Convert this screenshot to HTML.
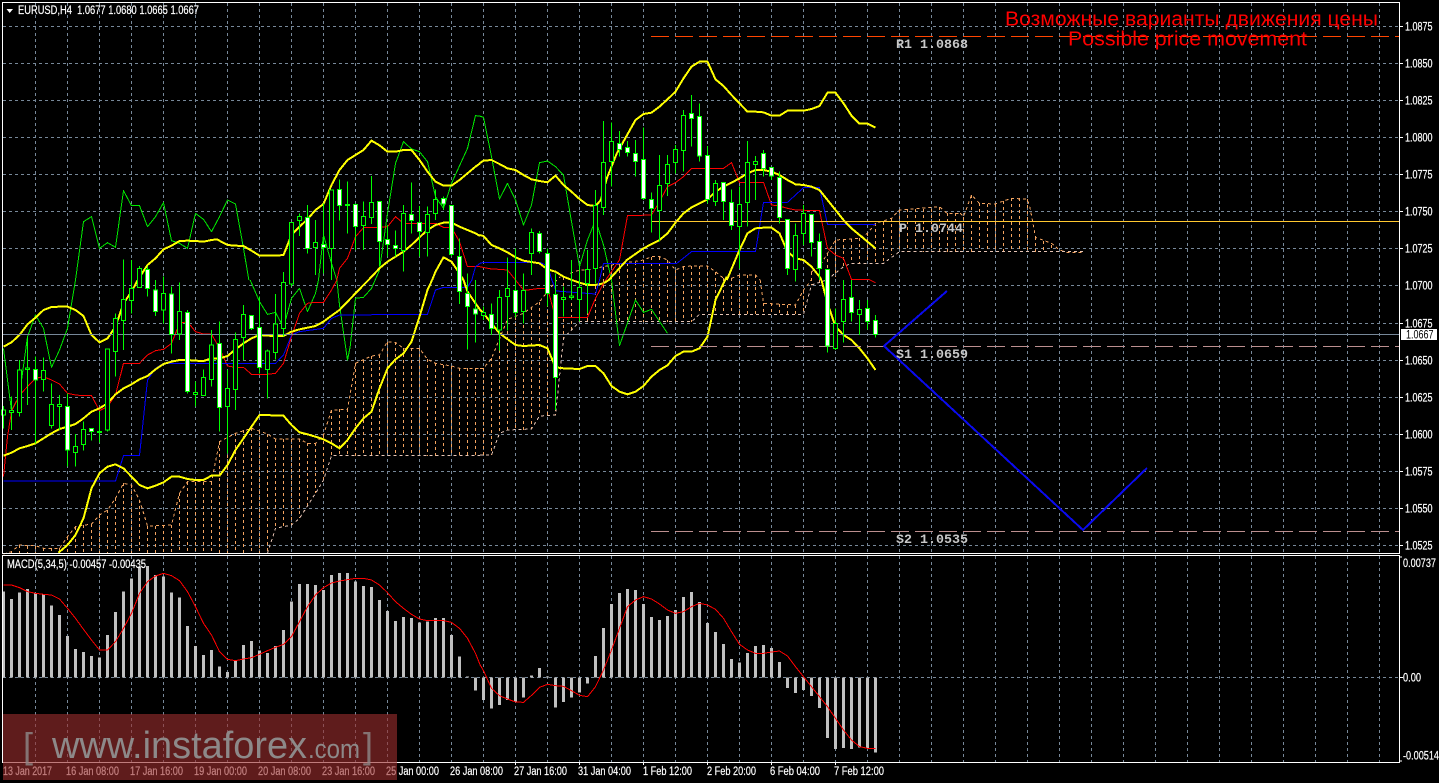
<!DOCTYPE html>
<html lang="en">
<head>
<meta charset="utf-8">
<title>EURUSD,H4</title>
<style>
html,body{margin:0;padding:0;background:#000;width:1439px;height:783px;overflow:hidden}
svg{position:absolute;left:0;top:0;display:block}
.ax{font:11.5px "Liberation Sans",sans-serif;fill:#fff;stroke:#fff;stroke-width:.2}
.lv{font:bold 13.33px "Liberation Mono",monospace;fill:#c8c8c8}
.rd{font:20px "Liberation Sans","Noto Sans CJK SC",sans-serif;fill:#f00}
.wm{font-family:"Liberation Sans",sans-serif;fill:#8d8989}
</style>
</head>
<body>
<svg xmlns="http://www.w3.org/2000/svg" width="1439" height="783" viewBox="0 0 1439 783">
<rect width="1439" height="783" fill="#000"/>
<g shape-rendering="crispEdges">
<!-- grid -->
<path fill="none" stroke="#778899" stroke-dasharray="3 3" d="M3 26.5H1399M3 63.5H1399M3 100.5H1399M3 137.5H1399M3 174.5H1399M3 211.5H1399M3 248.5H1399M3 285.5H1399M3 323.5H1399M3 360.5H1399M3 397.5H1399M3 434.5H1399M3 471.5H1399M3 508.5H1399M3 545.5H1399M3 677.5H1399"/>
<path fill="none" stroke="#778899" stroke-dasharray="3 3" d="M35.5 3V553M67.5 3V553M99.5 3V553M131.5 3V553M163.5 3V553M195.5 3V553M227.5 3V553M259.5 3V553M291.5 3V553M323.5 3V553M355.5 3V553M387.5 3V553M419.5 3V553M451.5 3V553M483.5 3V553M515.5 3V553M547.5 3V553M579.5 3V553M611.5 3V553M643.5 3V553M675.5 3V553M707.5 3V553M739.5 3V553M771.5 3V553M803.5 3V553M835.5 3V553M867.5 3V553M899.5 3V553M931.5 3V553M963.5 3V553M995.5 3V553M1027.5 3V553M1059.5 3V553M1091.5 3V553M1123.5 3V553M1155.5 3V553M1187.5 3V553M1219.5 3V553M1251.5 3V553M1283.5 3V553M1315.5 3V553M1347.5 3V553M1379.5 3V553"/>
<path fill="none" stroke="#778899" stroke-dasharray="3 3" d="M35.5 556V762M67.5 556V762M99.5 556V762M131.5 556V762M163.5 556V762M195.5 556V762M227.5 556V762M259.5 556V762M291.5 556V762M323.5 556V762M355.5 556V762M387.5 556V762M419.5 556V762M451.5 556V762M483.5 556V762M515.5 556V762M547.5 556V762M579.5 556V762M611.5 556V762M643.5 556V762M675.5 556V762M707.5 556V762M739.5 556V762M771.5 556V762M803.5 556V762M835.5 556V762M867.5 556V762M899.5 556V762M931.5 556V762M963.5 556V762M995.5 556V762M1027.5 556V762M1059.5 556V762M1091.5 556V762M1123.5 556V762M1155.5 556V762M1187.5 556V762M1219.5 556V762M1251.5 556V762M1283.5 556V762M1315.5 556V762M1347.5 556V762M1379.5 556V762"/>

<!-- cloud verticals -->
<path fill="none" stroke="#f4a460" stroke-dasharray="3 3" d="M11.5 552V553M19.5 545V553M27.5 546V553M35.5 546V553M43.5 548V553M51.5 548V553M59.5 548V553M67.5 537V553M75.5 527V553M83.5 525V553M91.5 524V553M99.5 515V553M107.5 510V553M115.5 498V553M123.5 483V553M131.5 485V553M139.5 500V553M147.5 526V553M155.5 526V553M163.5 525V553M171.5 525V553M179.5 493V553M187.5 482V553M195.5 482V553M203.5 482V553M211.5 482V553M219.5 442V553M227.5 437V553M235.5 433V553M243.5 430V553M251.5 428V553M259.5 431V553M267.5 434V553M275.5 439V528M283.5 439V527M291.5 439V525M299.5 439V518M307.5 443V507M315.5 443V493M323.5 435V480M331.5 410V456M339.5 409V456M347.5 409V456M355.5 363V456M363.5 360V456M371.5 356V456M379.5 355V456M387.5 342V456M395.5 342V456M403.5 348V456M411.5 348V456M419.5 348V456M427.5 359V456M435.5 363V456M443.5 365V456M451.5 366V456M459.5 368V456M467.5 368V456M475.5 368V456M483.5 368V455M491.5 358V455M499.5 338V433M507.5 319V430M515.5 317V430M523.5 313V430M531.5 307V429M539.5 302V416M547.5 292V415M555.5 282V415M563.5 277V338M571.5 273V330M579.5 270V322M587.5 270V322M595.5 268V322M603.5 267V322M611.5 265V322M619.5 264V322M627.5 263V322M635.5 262V322M643.5 260V322M651.5 257V322M659.5 257V322M667.5 260V322M675.5 270V322M683.5 267V322M691.5 266V322M699.5 266V314M707.5 266V314M715.5 272V314M723.5 278V314M731.5 278V314M739.5 275V314M747.5 275V314M755.5 275V314M763.5 303V314M771.5 303V314M779.5 304V314M787.5 305V314M795.5 305V314M803.5 290V314M811.5 272V285M819.5 267V283M827.5 253V283M835.5 240V277M843.5 239V267M851.5 239V263M859.5 238V263M867.5 233V263M875.5 223V263M883.5 222V263M891.5 218V255M899.5 210V252M907.5 209V252M915.5 209V252M923.5 209V252M931.5 209V252M939.5 207V252M947.5 213V252M955.5 213V252M963.5 217V252M971.5 195V252M979.5 203V252M987.5 204V252M995.5 204V252M1003.5 201V252M1011.5 198V252M1019.5 198V252M1027.5 199V252M1035.5 237V252M1043.5 241V252M1051.5 245V252"/>

<!-- Zoom-4 coordinate group (0,280) -->
<g transform="translate(.17 280) scale(.33333)" fill="none" stroke-linejoin="round">
<path stroke="#f4a460" stroke-width="3" stroke-dasharray="9 9" d="M10 822L34 815 58 795 82 797 106 797 130 805 178 805 202 770 226 740 274 732 298 705 322 690 346 655 370 610 394 615 418 660 442 738 514 735 538 640 562 605 634 605 658 485 706 460 754 445 802 462 826 477 898 477 922 490 946 490 970 465 994 390 1042 388 1066 250 1114 228 1138 225 1162 185 1186 187 1210 205 1258 205 1282 238 1306 250 1354 258 1378 265 1440 265"/>
<path stroke="#e6c4b4" stroke-width="3" stroke-dasharray="9 9" d="M802 820L826 745 874 735 898 715 946 640 970 600 994 527 1440 527"/>
<path stroke="#00e800" stroke-width="3" d="M10 205L22 300 34 392 58 345 82 170 106 105 130 145 154 262 178 210 202 145 226 0"/>
<path stroke="#00e800" stroke-width="3" d="M750 0L778 65 802 103 826 97 850 142 874 55 898 25 922 95 946 40 955 0"/>
<path stroke="#00e800" stroke-width="3" d="M1010 0L1018 75 1042 240 1050 200 1066 55 1090 52 1114 25 1125 0"/>
<path stroke="#f00" stroke-width="3" d="M10 590L22 470 34 395 58 345 82 320 106 295 130 290 154 300 178 312 202 340 226 345 250 347 274 347 298 392 322 380 346 345 370 250 394 250 418 250 442 225 466 212 490 208 514 190 538 130 562 125 586 155 610 162 634 162 658 205 682 258 706 262 730 262 754 283 778 283 802 283 826 280 850 250 874 170 898 100 922 70 946 67 970 67 994 30 1010 0"/>
<path stroke="#00f" stroke-width="3" d="M10 603H346L370 527H418L442 300 466 265 490 250H826L850 225 874 165 898 155 970 145 994 115 1018 105 1282 103 1306 30 1330 22 1402 22 1415 0"/>
<path stroke="#ff0" stroke-width="6" d="M10 200L34 187 58 165 82 133 106 113 130 90 154 81 178 80 202 80 226 90 250 108 274 165 298 187 322 175 346 140 370 70 394 35 410 5 418 -8"/>
<path stroke="#ff0" stroke-width="6" d="M10 527L34 518 58 505 82 498 106 490 130 475 154 460 178 447 202 440 226 432 250 415 274 395 298 385 322 370 346 343 370 325 394 313 418 298 442 288 466 268 490 252 514 245 538 240 562 240 586 242 610 243 634 235 658 235 682 228 706 208 730 190 754 175 778 165 802 167 826 168 850 168 874 155 898 148 922 143 946 138 970 125 994 107 1018 90 1042 65 1066 40 1090 15 1105 0"/>
<path stroke="#ff0" stroke-width="6" d="M175 818L202 795 226 765 250 715 274 625 298 580 322 560 346 553 370 565 394 590 418 615 442 625 466 617 490 607 514 590 538 590 562 597 586 600 610 600 634 587 658 587 682 555 706 510 730 475 754 440 778 405 802 405 826 407 850 407 874 435 898 457 922 463 946 470 970 478 994 490 1018 505 1042 480 1066 445 1090 415 1114 395 1138 325 1162 265 1186 238 1210 220 1234 185 1258 110 1282 30 1296 0"/>
<path stroke="#ff0" stroke-width="6" d="M1390 0L1402 35 1426 70 1440 90"/>
</g>

<!-- Zoom-1 coordinate group (0,0) -->
<g transform="translate(.17 0) scale(.33333)" fill="none" stroke-linejoin="round">
<path stroke="#00e800" stroke-width="3" d="M226 840L250 665 274 650 298 745 322 728 346 742 370 572 394 617 418 617 442 680 466 650 490 608 514 722 538 730 562 745 586 640 610 658 634 695 658 650 682 600 706 612 730 745 746 840"/>
<path stroke="#00e800" stroke-width="3" d="M955 840L970 705 994 790 1010 840"/>
<path stroke="#00e800" stroke-width="3" d="M1125 840L1138 810 1162 640 1186 490 1210 425 1234 447 1258 455 1282 485 1306 590 1330 625 1354 550 1402 445 1426 347 1440 348"/>
<path stroke="#f00" stroke-width="3" d="M1010 840L1018 805 1042 775 1066 710 1090 683 1114 682 1138 682 1162 680 1186 650 1210 670 1306 670 1330 682 1354 682 1378 725 1402 800 1440 800"/>
<path stroke="#00f" stroke-width="3" d="M1415 840L1426 800 1440 790"/>
<path stroke="#ff0" stroke-width="6" d="M418 832L442 795 466 775 490 748 514 737 538 723 562 722 586 723 610 725 634 720 650 718 682 735 706 737 730 738 754 752 778 767 802 767 826 767 850 765 874 705 898 680 922 658 946 630 970 612 994 555 1018 510 1042 480 1066 465 1090 450 1114 422 1138 436 1162 455 1186 455 1210 450 1234 450 1258 480 1282 515 1306 545 1330 557 1354 557 1378 540 1402 520 1426 500 1440 490"/>
<path stroke="#ff0" stroke-width="6" d="M1105 840L1138 805 1162 785 1186 770 1210 755 1234 735 1258 712 1282 690 1306 675 1330 668 1354 668 1378 680 1402 690 1426 700 1440 708"/>
<path stroke="#ff0" stroke-width="6" d="M1296 840L1306 815 1330 772 1354 785 1378 820 1390 840"/>
</g>

<!-- Zoom-2 coordinate group (480,0) -->
<g transform="translate(480.17 0) scale(.33333)" fill="none" stroke-linejoin="round">
<path stroke="#f4a460" stroke-width="3" stroke-dasharray="9 9" d="M270 820L298 810 322 810 346 805 370 800 394 795 490 780 514 770 538 770 562 780 586 810 610 800 634 798 682 798 706 815 730 835 754 835 778 825 826 825 840 840"/>
<path stroke="#f4a460" stroke-width="3" stroke-dasharray="9 9" d="M994 815L1018 800 1042 760 1066 720 1138 715 1162 700 1186 670 1234 655 1258 630 1378 620 1400 640 1440 640"/>
<path stroke="#e6c4b4" stroke-width="3" stroke-dasharray="9 9" d="M1040 840L1090 800 1114 790 1210 790 1258 755 1440 755"/>
<path stroke="#00e800" stroke-width="3" d="M-2 348L10 352 34 470 58 597 82 550 106 600 130 675 154 615 178 488 202 483 226 500 250 525 274 665 298 800 322 720 346 660 370 735 394 840"/>
<path stroke="#f00" stroke-width="3" d="M-2 800L34 807 58 808 82 810 106 840"/>
<path stroke="#f00" stroke-width="3" d="M370 850L418 780 442 647 514 645 538 605 562 560 586 548 610 530 634 505 730 505 754 488 778 547 850 547 874 615 898 618 922 625 946 630 1018 632 1042 745 1066 765 1090 775 1114 838 1165 838"/>
<path stroke="#00f" stroke-width="3" d="M-2 790L10 787 178 787 202 797 215 840"/>
<path stroke="#00f" stroke-width="3" d="M358 840L370 790 590 790 634 755 826 755 850 607 922 607 970 563 1018 563 1042 673 1186 673"/>
<path stroke="#ff0" stroke-width="6" d="M-2 490L10 482 34 480 58 492 82 505 106 510 130 525 154 538 178 543 202 547 226 527 250 555 274 575 298 597 322 615 346 618 362 600 380 535 410 460 466 360 490 342 514 338 538 320 562 298 586 275 610 235 634 200 658 185 682 185 706 238 730 258 754 285 778 310 802 335 826 335 850 337 874 347 898 347 922 332 946 332 970 332 994 327 1018 318 1042 278 1066 278 1090 310 1114 347 1138 371 1162 371 1186 383"/>
<path stroke="#ff0" stroke-width="6" d="M-2 705L10 708 34 735 58 745 82 757 106 772 130 782 154 786 178 790 202 808 226 815 250 830 275 840 298 848 322 855 346 855 370 850 386 840 440 780 490 745 538 720 562 700 586 668 610 640 634 622 658 610 682 598 706 575 730 560 754 548 778 535 802 520 826 510 850 510 874 515 898 525 922 540 946 553 970 555 994 560 1018 570 1042 600 1066 630 1090 660 1114 685 1138 705 1162 725 1186 745"/>
<path stroke="#ff0" stroke-width="6" d="M740 840L778 750 802 700 826 685 850 683 874 683 898 700 922 755 946 775 970 780 994 800 1018 830 1024 840"/>
</g>

<!-- Zoom-3 coordinate group (960,0) -->
<g transform="translate(960.17 0) scale(.33333)" fill="none">
<path stroke="#f4a460" stroke-width="3" stroke-dasharray="9 9" d="M0 640L10 650 34 585 58 610 106 612 130 603 154 595 202 598 210 625 226 712 274 730 298 750 320 757 370 757"/>
<path stroke="#e6c4b4" stroke-width="3" stroke-dasharray="9 9" d="M0 755H370"/>
</g>

<!-- Zoom-5 coordinate group (480,280) -->
<g transform="translate(480.17 280) scale(.33333)" fill="none" stroke-linejoin="round">
<path stroke="#f4a460" stroke-width="3" stroke-dasharray="9 9" d="M0 265L10 265 34 235 82 118 130 100 178 65 226 5 240 -10"/>
<path stroke="#f4a460" stroke-width="3" stroke-dasharray="9 9" d="M840 0L850 70 946 75 970 30 994 0"/>
<path stroke="#e6c4b4" stroke-width="3" stroke-dasharray="9 9" d="M0 525H34L58 460 82 450 154 447 178 408 226 405 238 290 250 175 298 125 634 125 658 103 970 103 994 15 1040 0"/>
<path stroke="#00e800" stroke-width="3" d="M394 0L418 197 466 60 490 97 514 88 562 160"/>
<path stroke="#f00" stroke-width="3" d="M106 0L130 30 142 30 178 25 202 25 226 112 322 112 346 55 370 10"/>
<path stroke="#f00" stroke-width="3" d="M1165 -2L1186 8"/>
<path stroke="#00f" stroke-width="3" d="M215 0L228 33 346 42 358 0"/>
<path stroke="#ff0" stroke-width="6" d="M-2 88L10 100 58 160 106 195 130 198 178 195 202 205 226 262 250 265 298 267 322 258 346 258 370 280 394 318 418 335 442 343 466 335 490 318 514 290 538 270 562 256 586 228 610 215 634 215 658 205 682 170 706 60 730 10 740 -10"/>
<path stroke="#ff0" stroke-width="6" d="M1024 0L1042 70 1066 140 1090 165 1114 180 1138 205 1162 235 1186 270"/>
</g>

<!-- levels -->
<path stroke="#ff4500" stroke-dasharray="18 6" d="M651 36.5H1399" fill="none"/>
<path stroke="#ffc830" d="M651 221.5H1399" fill="none"/>
<path stroke="#bc8f8f" stroke-dasharray="18 6" d="M651 346.5H1399" fill="none"/>
<path stroke="#bc8f8f" stroke-dasharray="18 6" d="M651 531.5H1399" fill="none"/>
<path stroke="#778899" d="M3 334.5H1399" fill="none"/>

<!-- candles n0-59 -->
<g transform="translate(.17 280) scale(.33333)" stroke="#0f0" stroke-width="3">
<path fill="none" d="M10 378V445M34 350V450M58 240V410M82 170V375M106 230V490M130 232V335M154 310V445M178 345V450M202 340V560M226 462V560M250 425V512M274 446V482M298 395V488M322 207V455M346 100V290M370 -62V210M394 -60V100M418 -42V22M442 -40V50M466 0V108M490 -10V130M514 20V220M538 8V180M562 90V340M586 305V380M610 268V348M634 150V320M658 125V455M682 270V520M706 158V390M730 75V240M754 106V150M778 50V280M802 208V356M826 42V238M850 -24V170M874 -173V20M898 -200V-132M922 -225V-80M946 -180V-15M970 -230V-20M994 -270V0M1018 -302V-178M1042 -295V-140M1066 -230V-90M1090 -235V-90M1114 -312V-168M1138 -235V-40M1162 -165V-70M1186 -148V-70M1210 -225V-25M1234 -292V-140M1258 -222V-70M1282 -220V-70M1306 -272V-180M1330 -250V-210M1354 -223V-70M1378 -125V72M1402 -20V208M1426 0V188"/>
<path fill="#000" d="M4 390h12v15h-12zM28 392h12v5h-12zM52 270h12v128h-12zM76 264h12v4h-12zM124 272h12v26h-12zM148 373h12v64h-12zM172 373h12v6h-12zM220 500h12v17h-12zM244 448h12v45h-12zM292 455h12v3h-12zM316 207h12v243h-12zM340 115h12v99h-12zM364 58h12v64h-12zM388 25h12v37h-12zM412 -35h12v57h-12zM484 40h12v50h-12zM532 95h12v67h-12zM580 338h12v6h-12zM604 292h12v55h-12zM628 195h12v103h-12zM676 325h12v55h-12zM700 178h12v150h-12zM724 103h12v69h-12zM796 213h12v55h-12zM820 132h12v86h-12zM844 7h12v138h-12zM868 -173h12v185h-12zM892 -190h12v12h-12zM940 -113h12v16h-12zM988 -270h12v175h-12zM1036 -227h12v3h-12zM1084 -190h12v27h-12zM1108 -232h12v44h-12zM1204 -200h12v112h-12zM1276 -197h12v54h-12zM1300 -242h12v42h-12z"/>
<path fill="#fff" d="M100 268h12v32h-12zM196 380h12v130h-12zM268 446h12v8h-12zM436 -32h12v57h-12zM460 30h12v65h-12zM508 42h12v121h-12zM556 97h12v238h-12zM652 190h12v192h-12zM748 106h12v40h-12zM772 143h12v119h-12zM916 -188h12v93h-12zM964 -107h12v10h-12zM1012 -272h12v49h-12zM1060 -226h12v66h-12zM1132 -235h12v120h-12zM1156 -122h12v16h-12zM1180 -103h12v8h-12zM1228 -196h12v17h-12zM1252 -172h12v27h-12zM1324 -244h12v16h-12zM1348 -223h12v146h-12zM1372 -70h12v105h-12zM1396 40h12v40h-12zM1420 87h12v15h-12z"/>
</g>

<!-- candles n60-109 -->
<g transform="translate(480.17 280) scale(.33333)" stroke="#0f0" stroke-width="3">
<path fill="none" d="M10 80V120M34 70V165M58 30V212M82 -67V152M106 -95V112M130 -20V130M154 -155V-15M178 -147V-80M202 -95V80M226 -20V390M250 20V110M274 -60V60M298 -45V125M322 -90V100M346 -270V10M370 -477V-195M394 -473V-280M418 -447V-370M442 -417V-370M466 -420V-310M490 -458V-240M514 -262V-142M538 -375V-115M562 -375V-252M586 -405V-320M610 -510V-325M634 -555V-400M658 -530V-355M682 -402V-230M706 -300V-222M730 -292V-180M754 -272V-150M778 -280V-35M802 -417V-160M826 -372V-240M850 -390V-310M874 -337V-300M898 -325V-170M922 -181V-15M946 -170V5M970 -225V-105M994 -197V-70M1018 -140V0M1042 -32V218M1066 85V210M1090 0V188M1114 0V125M1138 60V165M1162 60V148M1186 105V172"/>
<path fill="#000" d="M4 97h12v10h-12zM52 52h12v98h-12zM76 25h12v25h-12zM124 32h12v63h-12zM148 -143h12v63h-12zM244 52h12v6h-12zM268 48h12v4h-12zM292 22h12v36h-12zM316 -32h12v42h-12zM340 -224h12v189h-12zM364 -353h12v136h-12zM388 -416h12v61h-12zM532 -284h12v76h-12zM556 -347h12v57h-12zM580 -392h12v39h-12zM604 -493h12v104h-12zM700 -290h12v54h-12zM772 -227h12v67h-12zM796 -353h12v120h-12zM820 -356h12v10h-12zM940 -133h12v101h-12zM964 -200h12v60h-12zM1060 130h12v75h-12zM1084 58h12v67h-12zM1132 88h12v15h-12z"/>
<path fill="#fff" d="M28 103h12v43h-12zM100 32h12v65h-12zM172 -140h12v54h-12zM196 -80h12v120h-12zM220 43h12v249h-12zM412 -409h12v17h-12zM436 -397h12v14h-12zM460 -379h12v23h-12zM484 -362h12v117h-12zM508 -241h12v26h-12zM628 -500h12v15h-12zM652 -490h12v118h-12zM676 -374h12v132h-12zM724 -292h12v56h-12zM748 -233h12v69h-12zM844 -380h12v46h-12zM868 -337h12v25h-12zM892 -308h12v120h-12zM916 -181h12v146h-12zM988 -197h12v84h-12zM1012 -115h12v80h-12zM1036 -32h12v230h-12zM1108 52h12v45h-12zM1156 85h12v39h-12zM1180 122h12v41h-12z"/>
</g>

<!-- forecast -->
<path fill="none" stroke="#0a0aee" stroke-width="2" stroke-linejoin="round" d="M947 291L884 346 1083 530 1147 468"/>

<!-- MACD histogram -->
<g transform="translate(.17 550) scale(.33333)" fill="none">
<path stroke="#c0c0c0" stroke-width="9" d="M10 382V125M34 382V147M58 382V128M82 382V117M106 382V130M130 382V133M154 382V167M178 382V195M202 382V258M226 382V297M250 382V306M274 382V318M298 382V323M322 382V255M346 382V186M370 382V125M394 382V86M418 382V50M442 382V48M466 382V75M490 382V80M514 382V128M538 382V143M562 382V228M586 382V288M610 382V315M634 382V300M658 382V350M682 382V366M706 382V330M730 382V285M754 382V273M778 382V302M802 382V309M826 382V288M850 382V240M874 382V155M898 382V102M922 382V102M946 382V105M970 382V120M994 382V75M1018 382V69M1042 382V69M1066 382V95M1090 382V108M1114 382V111M1138 382V150M1162 382V183M1186 382V213M1210 382V201M1234 382V204M1258 382V218M1282 382V215M1306 382V204M1330 382V204M1354 382V255M1378 382V320M1402 382V379M1426 382V422"/>
<path stroke="#f00" stroke-width="3" stroke-linejoin="round" d="M10 105L34 105 58 113 82 125 106 130 130 133 154 135 178 147 202 175 226 205 250 238 274 270 298 300 322 300 346 275 370 235 394 190 418 130 442 95 466 78 490 70 514 77 538 92 562 125 586 170 610 220 634 255 658 305 682 328 706 332 730 327 754 323 778 313 802 302 826 292 850 283 874 260 898 215 922 170 946 135 970 113 994 99 1018 93 1042 89 1066 85 1090 85 1114 90 1138 105 1162 128 1186 155 1210 175 1234 193 1258 207 1282 212 1306 212 1330 212 1354 217 1378 235 1402 265 1426 310 1440 345"/>
</g>
<g transform="translate(480.17 550) scale(.33333)" fill="none">
<path stroke="#c0c0c0" stroke-width="9" d="M10 382V450M34 382V476M58 382V465M82 382V450M106 382V456M130 382V443M154 382V377M178 382V354M202 382V380M226 382V473M250 382V456M274 382V443M298 382V427M322 382V400M346 382V318M370 382V234M394 382V162M418 382V129M442 382V117M466 382V120M490 382V162M514 382V201M538 382V210M562 382V198M586 382V180M610 382V141M634 382V126M658 382V156M682 382V219M706 382V246M730 382V282M754 382V327M778 382V338M802 382V309M826 382V288M850 382V285M874 382V294M898 382V336M922 382V414M946 382V429M970 382V420M994 382V438M1018 382V474M1042 382V564M1066 382V597M1090 382V594M1114 382V597M1138 382V592M1162 382V595M1186 382V608"/>
<path stroke="#f00" stroke-width="3" stroke-linejoin="round" d="M0 345L10 362 34 415 58 437 82 447 106 456 130 457 154 436 178 412 202 403 226 407 250 409 274 422 298 436 322 440 346 410 370 360 394 300 418 235 442 170 466 150 490 140 514 147 538 162 562 180 586 190 610 185 634 170 658 160 682 165 706 178 730 205 754 245 778 283 802 300 826 310 850 310 874 306 898 303 922 318 946 350 970 380 994 410 1018 440 1042 470 1066 505 1090 540 1114 570 1138 590 1162 595 1186 596"/>
</g>

<!-- frame -->
<path fill="none" stroke="#fff" d="M2.5 2.5H1399.5V553.5H2.5ZM2.5 555.5H1399.5V762.5H2.5Z"/>
<!-- ticks -->
<path fill="none" stroke="#fff" d="M1400 26.5h3M1400 63.5h3M1400 100.5h3M1400 137.5h3M1400 174.5h3M1400 211.5h3M1400 248.5h3M1400 323.5h3M1400 360.5h3M1400 397.5h3M1400 434.5h3M1400 471.5h3M1400 508.5h3M1400 545.5h3M1400 677.5h3M1400 557h2M1400 761h2M515.5 763v2M579.5 763v2M643.5 763v2M707.5 763v2M771.5 763v2M835.5 763v2"/>
</g>

<!-- price box -->
<rect x="1401" y="329" width="36" height="11" fill="#fff"/>
<text x="1406" y="338.5" style="font:11.5px 'Liberation Sans',sans-serif;fill:#000" textLength="27.5" lengthAdjust="spacingAndGlyphs">1.0667</text>

<!-- axis labels -->
<g class="ax">
<text x="1405" y="30.5" textLength="27.5" lengthAdjust="spacingAndGlyphs">1.0875</text>
<text x="1405" y="67.5" textLength="27.5" lengthAdjust="spacingAndGlyphs">1.0850</text>
<text x="1405" y="104.5" textLength="27.5" lengthAdjust="spacingAndGlyphs">1.0825</text>
<text x="1405" y="141.5" textLength="27.5" lengthAdjust="spacingAndGlyphs">1.0800</text>
<text x="1405" y="178.5" textLength="27.5" lengthAdjust="spacingAndGlyphs">1.0775</text>
<text x="1405" y="215.5" textLength="27.5" lengthAdjust="spacingAndGlyphs">1.0750</text>
<text x="1405" y="252.5" textLength="27.5" lengthAdjust="spacingAndGlyphs">1.0725</text>
<text x="1405" y="289.5" textLength="27.5" lengthAdjust="spacingAndGlyphs">1.0700</text>
<text x="1405" y="327.5" textLength="27.5" lengthAdjust="spacingAndGlyphs">1.0675</text>
<text x="1405" y="364.5" textLength="27.5" lengthAdjust="spacingAndGlyphs">1.0650</text>
<text x="1405" y="401.5" textLength="27.5" lengthAdjust="spacingAndGlyphs">1.0625</text>
<text x="1405" y="438.5" textLength="27.5" lengthAdjust="spacingAndGlyphs">1.0600</text>
<text x="1405" y="475.5" textLength="27.5" lengthAdjust="spacingAndGlyphs">1.0575</text>
<text x="1405" y="512.5" textLength="27.5" lengthAdjust="spacingAndGlyphs">1.0550</text>
<text x="1405" y="549.5" textLength="27.5" lengthAdjust="spacingAndGlyphs">1.0525</text>
<text x="1403" y="567" textLength="33" lengthAdjust="spacingAndGlyphs">0.00737</text>
<text x="1403" y="681.5" textLength="18" lengthAdjust="spacingAndGlyphs">0.00</text>
<text x="1403" y="759.5" textLength="36" lengthAdjust="spacingAndGlyphs">-0.00514</text>
<text x="18" y="14" textLength="181" lengthAdjust="spacingAndGlyphs" xml:space="preserve">EURUSD,H4  1.0677 1.0680 1.0665 1.0667</text>
<text x="7" y="568" textLength="139" lengthAdjust="spacingAndGlyphs">MACD(5,34,5) -0.00457 -0.00435</text>
<text x="3" y="775" textLength="49" lengthAdjust="spacingAndGlyphs">13 Jan 2017</text>
<text x="66" y="775" textLength="53" lengthAdjust="spacingAndGlyphs">16 Jan 08:00</text>
<text x="130" y="775" textLength="53" lengthAdjust="spacingAndGlyphs">17 Jan 16:00</text>
<text x="194" y="775" textLength="53" lengthAdjust="spacingAndGlyphs">19 Jan 00:00</text>
<text x="258" y="775" textLength="53" lengthAdjust="spacingAndGlyphs">20 Jan 08:00</text>
<text x="322" y="775" textLength="53" lengthAdjust="spacingAndGlyphs">23 Jan 16:00</text>
<text x="386" y="775" textLength="53" lengthAdjust="spacingAndGlyphs">25 Jan 00:00</text>
<text x="450" y="775" textLength="53" lengthAdjust="spacingAndGlyphs">26 Jan 08:00</text>
<text x="514" y="775" textLength="53" lengthAdjust="spacingAndGlyphs">27 Jan 16:00</text>
<text x="578" y="775" textLength="53" lengthAdjust="spacingAndGlyphs">31 Jan 04:00</text>
<text x="643" y="775" textLength="49" lengthAdjust="spacingAndGlyphs">1 Feb 12:00</text>
<text x="707" y="775" textLength="49" lengthAdjust="spacingAndGlyphs">2 Feb 20:00</text>
<text x="770" y="775" textLength="50" lengthAdjust="spacingAndGlyphs">6 Feb 04:00</text>
<text x="834" y="775" textLength="50" lengthAdjust="spacingAndGlyphs">7 Feb 12:00</text>
</g>
<polygon points="6.5,9 13,9 9.7,13" fill="#fff"/>

<!-- level labels -->
<text class="lv" x="896" y="48">R1 1.0868</text>
<text class="lv" x="899" y="232">P 1.0744</text>
<text class="lv" x="896" y="358">S1 1.0659</text>
<text class="lv" x="896" y="543">S2 1.0535</text>

<!-- red captions -->
<text class="rd" x="1005" y="25.5" textLength="373" lengthAdjust="spacingAndGlyphs">Возможные варианты движения цены</text>
<text class="rd" x="1068" y="45.5" textLength="239" lengthAdjust="spacingAndGlyphs">Possible price movement</text>

<!-- watermark -->
<rect x="3" y="714" width="394" height="66" fill="#992d2d" fill-opacity=".62"/>
<text class="wm" x="23" y="758" font-size="36" fill-opacity=".8">[</text>
<text class="wm" x="52" y="758" font-size="38" textLength="255" lengthAdjust="spacingAndGlyphs">www.instaforex</text>
<text class="wm" x="308" y="758" font-size="27" textLength="52" lengthAdjust="spacingAndGlyphs">.com</text>
<text class="wm" x="363" y="758" font-size="36" fill-opacity=".8">]</text>
</svg>
</body>
</html>
